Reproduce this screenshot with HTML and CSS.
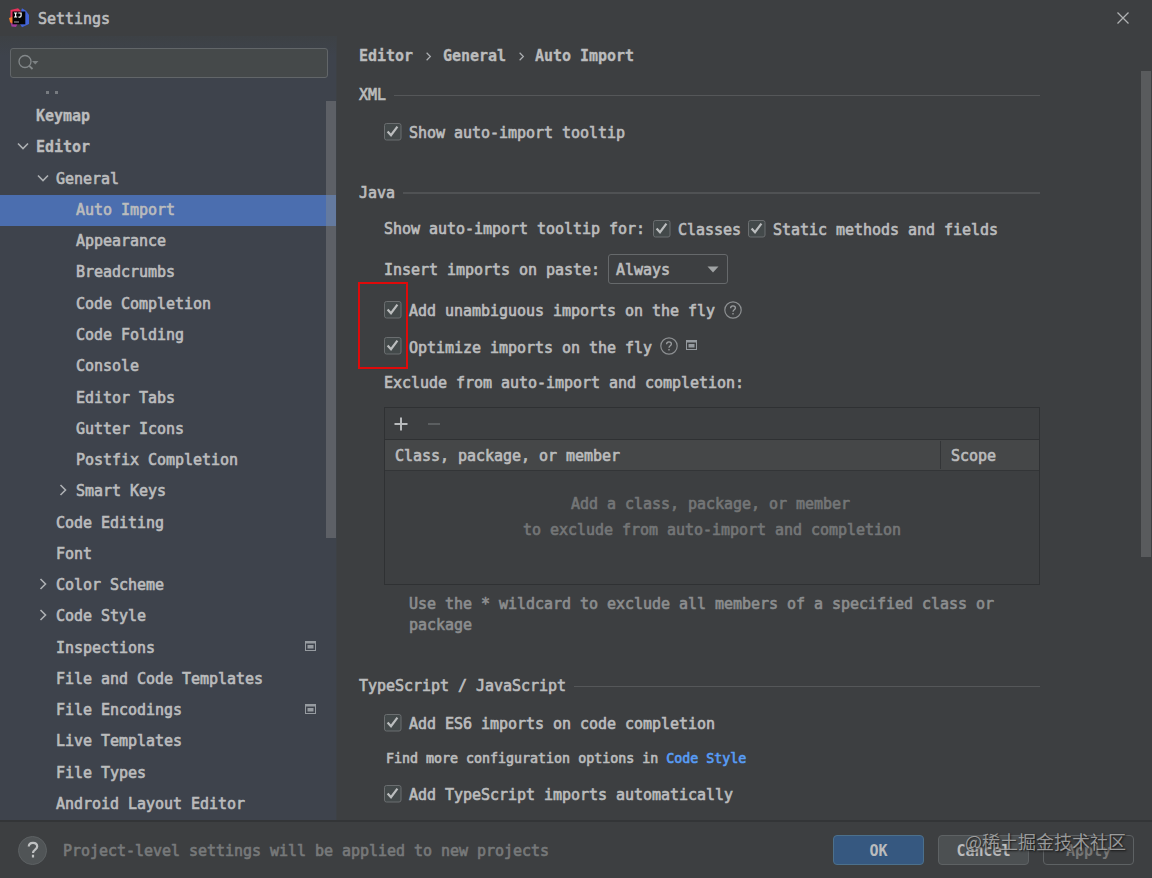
FILE: index.html
```html
<!DOCTYPE html>
<html lang="en">
<head>
<meta charset="utf-8">
<title>Settings</title>
<link rel="stylesheet" href="styles.css">
</head>
<body>
<svg width="0" height="0" class="defs">
  <symbol id="check" viewBox="0 0 18 18"><rect x=".5" y=".5" width="16.500" height="16.500" rx="2" fill="#43494a" stroke="#6b6e70"/><path d="M3.600 8.400 7 12.200 13.400 3.600" fill="none" stroke="#bbbdbe" stroke-width="2.200"/></symbol>
  <symbol id="down" viewBox="0 0 12 12"><path d="M1 3.5 6 8.5 11 3.5" fill="none" stroke="#adb0b3" stroke-width="1.6"/></symbol>
  <symbol id="right" viewBox="0 0 12 12"><path d="M3.5 1 8.5 6 3.5 11" fill="none" stroke="#adb0b3" stroke-width="1.6"/></symbol>
  <symbol id="proj" viewBox="0 0 11 10"><path d="M0 0h11v10H0zM1 2.5V9h9V2.5z" fill="#969ba0" fill-rule="evenodd"/><rect x="2.5" y="4" width="6" height="3.500" fill="#969ba0"/></symbol>
  <symbol id="help" viewBox="0 0 18 18"><circle cx="9" cy="9" r="8.2" fill="none" stroke="#8d9092" stroke-width="1.2"/><path d="M6.6 7.2C6.6 5.6 7.6 4.8 9 4.8s2.4.9 2.4 2.2C11.4 8.7 9 8.8 9 10.7M9 12v1.6" fill="none" stroke="#9a9d9f" stroke-width="1.3"/></symbol>
</svg>
<div class="window">
  <header class="titlebar">
    <svg class="logo" width="20" height="20" viewBox="0 0 20 20"><path d="M1.5 2 9 .3 13 4 5 17.5 1.5 15z" fill="#e8315b"/><path d="M0 10 6 8v9l-5-3z" fill="#f47b2a"/><path d="M13 .3 17 2.8 20 7v9l-7 3.3L9 13z" fill="#4364d8"/><path d="M2 15.5 9 15l-2 4-4.500-.5z" fill="#a23b9e"/><rect x="3.500" y="3.500" width="12.800" height="12.800" fill="#050506"/><path d="M5 5h3.200M6.600 5v4M5 9h3.200M9.300 5h2.800v2.800q0 1.300-1.400 1.300h-1.200" fill="none" stroke="#fff" stroke-width="1.200"/><path d="M5 14h5" stroke="#aaa"/></svg>
    <span class="title">Settings</span>
    <svg class="close" width="14" height="14" viewBox="0 0 14 14"><path d="M1.500 1.500 12.500 12.500M12.500 1.500 1.500 12.500" stroke="#b0b2b3" stroke-width="1.300"/></svg>
  </header>
  <div class="body">
    <aside class="sidebar">
      <div class="search"><svg width="22" height="18" viewBox="0 0 22 18"><circle cx="7" cy="7.500" r="6" fill="none" stroke="#83888a" stroke-width="1.300"/><path d="M11.200 11.800 14.500 15" stroke="#83888a" stroke-width="1.800"/><path d="M14 7h6.500l-3.200 3.600z" fill="#7b8082"/></svg></div>
      <div class="clipped"><i></i><i></i></div>
      <div class="treewrap">
        <nav class="tree">
          <div class="row l0 bold"><span>Keymap</span></div>
          <div class="row l0 bold"><svg><use href="#down"/></svg><span>Editor</span></div>
          <div class="row l1"><svg><use href="#down"/></svg><span>General</span></div>
          <div class="row l2 selected"><span>Auto Import</span></div>
          <div class="row l2"><span>Appearance</span></div>
          <div class="row l2"><span>Breadcrumbs</span></div>
          <div class="row l2"><span>Code Completion</span></div>
          <div class="row l2"><span>Code Folding</span></div>
          <div class="row l2"><span>Console</span></div>
          <div class="row l2"><span>Editor Tabs</span></div>
          <div class="row l2"><span>Gutter Icons</span></div>
          <div class="row l2"><span>Postfix Completion</span></div>
          <div class="row l2"><svg><use href="#right"/></svg><span>Smart Keys</span></div>
          <div class="row l1"><span>Code Editing</span></div>
          <div class="row l1"><span>Font</span></div>
          <div class="row l1"><svg><use href="#right"/></svg><span>Color Scheme</span></div>
          <div class="row l1"><svg><use href="#right"/></svg><span>Code Style</span></div>
          <div class="row l1"><span>Inspections</span><svg class="proj"><use href="#proj"/></svg></div>
          <div class="row l1"><span>File and Code Templates</span></div>
          <div class="row l1"><span>File Encodings</span><svg class="proj"><use href="#proj"/></svg></div>
          <div class="row l1"><span>Live Templates</span></div>
          <div class="row l1"><span>File Types</span></div>
          <div class="row l1"><span>Android Layout Editor</span></div>
        </nav>
        <div class="thumb"></div>
      </div>
    </aside>
    <main class="main">
      <div class="crumbs bold"><span>Editor</span><svg><use href="#right"/></svg><span>General</span><svg class="second"><use href="#right"/></svg><span>Auto Import</span></div>
      <div class="section xml"><span>XML</span><hr></div>
      <div class="opt show"><svg class="cb"><use href="#check"/></svg><span>Show auto-import tooltip</span></div>
      <div class="section java"><span>Java</span><hr></div>
      <div class="opt tips"><span>Show auto-import tooltip for:</span><svg class="cb"><use href="#check"/></svg><span class="low">Classes</span><svg class="cb"><use href="#check"/></svg><span class="low">Static methods and fields</span></div>
      <div class="opt insert"><span>Insert imports on paste:</span><div class="select"><span>Always</span><svg width="12" height="7" viewBox="0 0 12 7"><path d="M.5.500h11L6 6.500z" fill="#a0a3a4"/></svg></div></div>
      <div class="opt add"><svg class="cb"><use href="#check"/></svg><span>Add unambiguous imports on the fly</span><svg class="help"><use href="#help"/></svg></div>
      <div class="opt optimize"><svg class="cb"><use href="#check"/></svg><span>Optimize imports on the fly</span><svg class="help"><use href="#help"/></svg><svg class="proj"><use href="#proj"/></svg></div>
      <div class="opt exclude"><span>Exclude from auto-import and completion:</span></div>
      <section class="table">
        <div class="tools"><svg width="50" height="14" viewBox="0 0 50 14"><path d="M.5 7h13M7 .5v13" stroke="#b8babc" stroke-width="2"/><path d="M34 7h12" stroke="#5b5e60" stroke-width="2"/></svg></div>
        <div class="thead"><span class="member">Class, package, or member</span><span class="scope">Scope</span></div>
        <div class="empty"><span class="first">Add a class, package, or member</span><span>to exclude from auto-import and completion</span></div>
      </section>
      <p class="hint">Use the * wildcard to exclude all members of a specified class or package</p>
      <div class="section ts"><span>TypeScript / JavaScript</span><hr></div>
      <div class="opt es6"><svg class="cb"><use href="#check"/></svg><span>Add ES6 imports on code completion</span></div>
      <div class="opt find"><span>Find more configuration options in <a>Code Style</a></span></div>
      <div class="opt auto"><svg class="cb"><use href="#check"/></svg><span>Add TypeScript imports automatically</span></div>
    </main>
    <div class="scroll"><div></div></div>
  </div>
  <footer class="footer">
    <div class="round"><svg width="30" height="30" viewBox="0 0 30 30"><path d="M10.800 11.500C10.800 8.800 12.600 7.800 15 7.800s4.200 1.500 4.200 3.700c0 3-4.200 3.200-4.200 6.500M15 19.800v2.600" fill="none" stroke="#bfc1c2" stroke-width="2.200"/></svg></div>
    <span class="note">Project-level settings will be applied to new projects</span>
    <div class="btn ok">OK</div><div class="btn">Cancel</div><div class="btn off">Apply</div>
  </footer>
  <div class="marker"></div>
  <div class="watermark">@稀土掘金技术社区</div>
</div>
</body>
</html>
```
FILE: styles.css
```css
* { box-sizing: border-box; }
body { margin: 0; background: #3d3f41; color: #bbbcbd; font: 15px/20px "DejaVu Sans Mono", "Liberation Mono", monospace; letter-spacing: -0.03px; -webkit-text-stroke: 0.65px currentColor; overflow: hidden; }
.defs { position: absolute; }
svg { display: block; flex: none; }
span { white-space: pre; }
.window { position: relative; width: 1152px; height: 878px; display: flex; flex-direction: column; }
.titlebar { height: 36px; flex: none; display: flex; align-items: center; padding: 0 22px 0 9px; }
.title { margin: 1px auto 0 9px; }
.bold { font-weight: bold; -webkit-text-stroke: 0.3px currentColor; }
.body { height: 784px; flex: none; display: flex; }
.sidebar { width: 337px; flex: none; background: linear-gradient(#3d4145, #3e434c 20px); border-right: 1px solid #3d4145; }
.search { height: 30px; width: 318px; margin: 12px 0 0 10px; border: 1px solid #626669; border-radius: 3px; background: #45494a; padding: 7px; display: flex; align-items: center; }
.clipped { height: 23px; padding: 13px 0 0 46px; display: flex; gap: 6px; }
.clipped i { width: 3px; height: 3px; background: #777b80; }
.treewrap { display: flex; height: 719px; overflow: hidden; position: relative; }
.tree { width: 100%; }
.row { height: 31.27px; display: flex; align-items: center; padding-bottom: 1px; }
.row > svg:not(.proj) { width: 12px; height: 12px; margin: -2px 7px 0 -19px; }
.l0 { padding-left: 36px; }
.l1 { padding-left: 56px; }
.l2 { padding-left: 76px; }
.selected { background: #4b6eaf; }
.proj { width: 11px; height: 10px; }
.row .proj { margin: -3px 20px 0 auto; }
.thumb { position: absolute; right: 0; top: 0; width: 10px; height: 437px; background: rgba(135, 138, 138, .42); }
.main { width: 703px; padding-left: 22px; }
.crumbs { height: 39px; display: flex; align-items: center; }
.crumbs svg { width: 9px; height: 9px; margin: 1px 10px 0 11px; }
.crumbs .second { margin-right: 9px; }
.section { display: flex; align-items: center; gap: 8px; }
.section hr { flex: 1; height: 1px; border: 0; margin: 2px 0 0; background: #555759; }
.java hr { height: 2px; background: #505254; }
.java span { padding-top: 2px; }
.opt { display: flex; align-items: center; padding-left: 25px; }
.opt > span { padding-top: 2px; }
.cb { width: 18px; height: 18px; margin-right: 7px; margin-top: -1px; }
.help { width: 18px; height: 18px; margin-left: 9px; }
.xml { height: 39px; }
.show { height: 36px; }
.java { height: 38px; margin-top: 23px; }
.tips { height: 36px; }
.tips .cb { margin-left: 7px; }
.tips .cb:first-of-type { margin-left: 8px; }
.tips > span, .exclude > span { padding-top: 0; }
.tips > .low { padding-top: 1px; }
.insert { height: 44px; }
.select { width: 120px; height: 30px; margin-left: 8px; border: 1px solid #66696b; border-radius: 3px; display: flex; align-items: center; justify-content: space-between; padding: 0 8px 0 7px; }
.select span { padding-top: 2px; }
.add { height: 38px; }
.optimize { height: 35px; }
.optimize .help { margin: -2px 0 0 8px; }
.optimize .proj { margin: -3px 0 0 8px; }
.exclude { height: 37px; }
.table { margin: 6px 0 0 25px; width: 656px; height: 178px; border: 1px solid #2f3133; }
.tools { height: 32px; padding: 9px; border-bottom: 1px solid #2f3133; }
.thead { height: 31px; display: flex; align-items: center; justify-content: space-between; padding-left: 10px; background: #454748; border-bottom: 1px solid #333537; }
.member { padding-top: 2px; }
.scope { width: 99px; height: 28px; padding-left: 10px; line-height: 30px; border-left: 1px solid #333537; }
.empty { display: flex; flex-direction: column; align-items: center; padding-top: 20px; line-height: 26px; color: #747677; }
.first { margin-right: 3px; }
.hint { margin: 9px 0 30px 50px; width: 600px; line-height: 21px; color: #8b8d8e; }
.ts { height: 39px; }
.es6 { height: 36px; }
.find { height: 34px; padding-left: 27px; font-size: 13.3px; letter-spacing: 0; }
.find a { color: #589df6; }
.auto { height: 38px; }
.scroll { margin-left: auto; padding: 35px 1px 0 0; }
.scroll div { width: 10px; height: 486px; background: #595b5d; }
.footer { height: 58px; flex: none; border-top: 2px solid #333537; display: flex; align-items: center; padding: 0 18px 0 18px; }
.round { width: 29px; height: 29px; border-radius: 50%; background: #505456; border: 1px solid #5d6163; display: flex; align-items: center; justify-content: center; }
.note { margin: 0 auto 0 16px; padding-top: 2px; color: #77797a; }
.btn { width: 91px; height: 30px; border: 1px solid #5e6264; border-radius: 4px; background: #4c5052; text-align: center; line-height: 30px; margin-left: 14px; font-weight: bold; -webkit-text-stroke: 0; }
.ok { background: #365880; border-color: #4c708c; }
.off { background: transparent; color: #777; }
.marker { position: absolute; left: 358px; top: 282px; width: 50px; height: 87px; border: 2px solid #e00a0a; }
.watermark { position: absolute; left: 965px; top: 829px; font: 18px/24px "Noto Sans CJK SC", sans-serif; color: rgba(190, 190, 190, .75); letter-spacing: 0; -webkit-text-stroke: 0; text-shadow: 1px 1px 2px #111; white-space: nowrap; }
```
